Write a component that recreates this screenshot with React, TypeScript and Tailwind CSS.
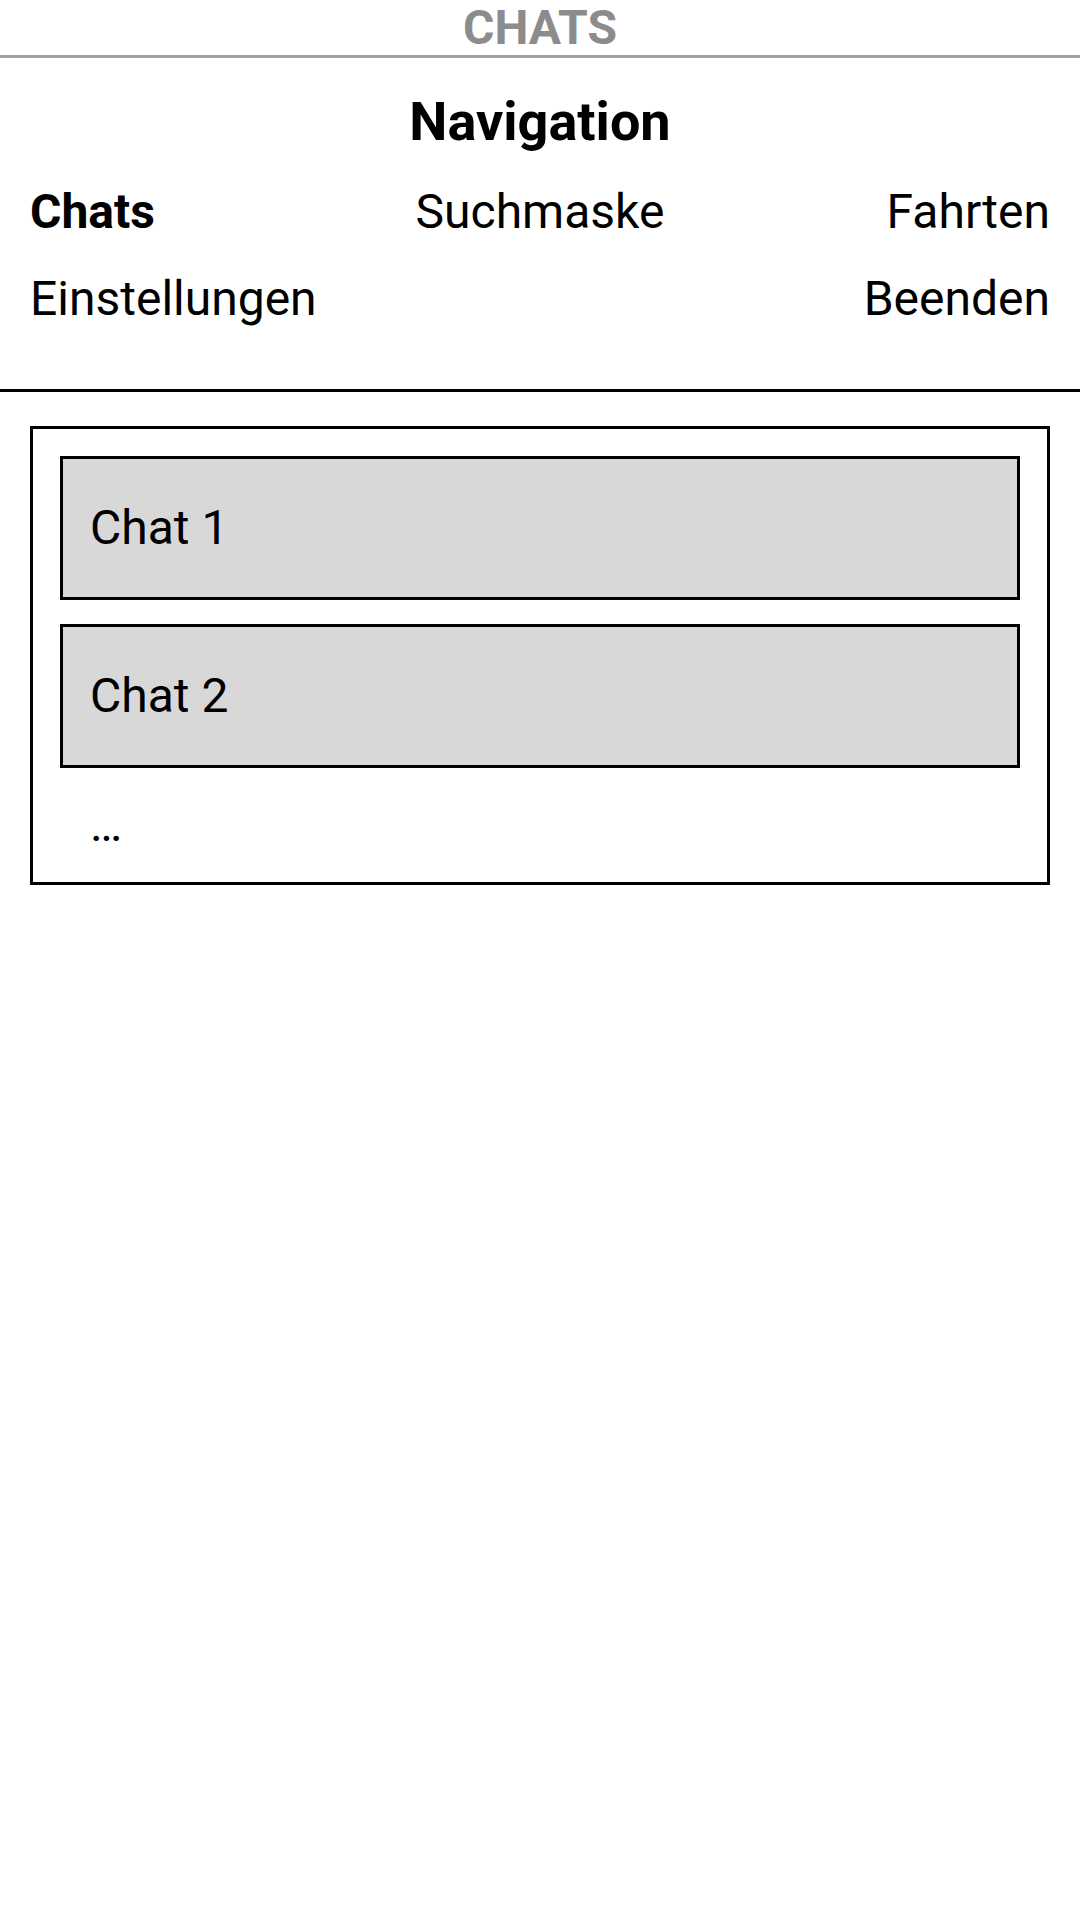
import React from 'react';

const chats = ['Chat 1', 'Chat 2'];

const App: React.FC = () => {
    return (
        <div className="w-[1080px] min-h-[1920px] bg-white text-black font-['Roboto',sans-serif]">
            <div className="text-center text-[48px] leading-[55px] font-bold text-[#8c8c8c] border-b-[3px] border-[#a0a0a0]">
                CHATS
            </div>

            <div className="px-[30px] pt-[32px] pb-[62px] border-b-[3px] border-black">
                <h1 className="text-center text-[54px] leading-[63px] font-bold">Navigation</h1>
                <div className="grid grid-cols-3 text-[48px] leading-[56px] mt-[31px] gap-y-[31px]">
                    <span className="font-bold">Chats</span>
                    <span className="text-center">Suchmaske</span>
                    <span className="text-right">Fahrten</span>
                    <span className="whitespace-nowrap">Einstellungen</span>
                    <span></span>
                    <span className="text-right">Beenden</span>
                </div>
            </div>

            <div className="mx-[30px] mt-[34px] border-[3px] border-black p-[27px]">
                <div className="flex flex-col gap-[24px]">
                    {chats.map(chat => (
                        <div
                            key={chat}
                            className="h-[144px] flex items-center px-[27px] bg-[#d8d8d8] border-[3px] border-black text-[48px] leading-[56px]"
                        >
                            {chat}
                        </div>
                    ))}
                </div>
                <div className="px-[30px] pt-[29px] pb-[2px] text-[48px] leading-[56px]">…</div>
            </div>
        </div>
    );
};

export default App;
